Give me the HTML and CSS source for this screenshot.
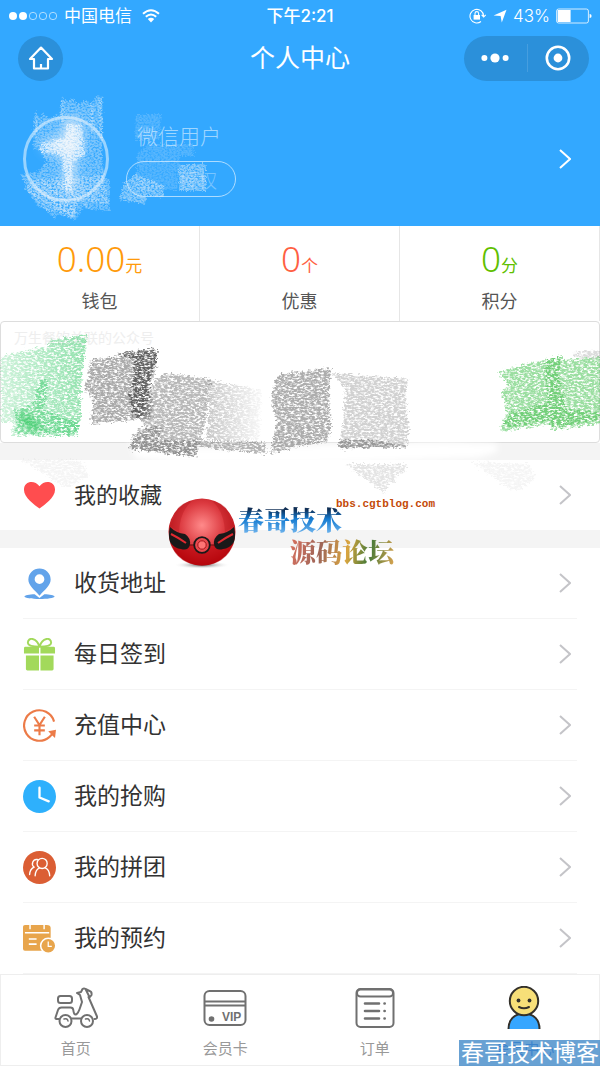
FILE: index.html
```html
<!DOCTYPE html>
<html lang="zh-CN">
<head>
    <meta charset="utf-8">
    <meta name="viewport" content="width=device-width, initial-scale=1">
    <title>个人中心</title>
    <link rel="stylesheet" href="styles.css">
</head>
<body>
<div class="page">
    <header class="top">
        <div class="status">
            <div class="status-left">
                <svg width="50" height="12" viewBox="0 0 50 12" fill="#fff" stroke="#fff">
                    <g stroke="none"><circle cx="5" cy="6" r="4"/><circle cx="15" cy="6" r="4"/></g>
                    <g fill="none" stroke-width=".6"><circle cx="25" cy="6" r="3.7"/><circle cx="35" cy="6" r="3.7"/><circle cx="45" cy="6" r="3.7"/></g>
                </svg>
                <span>中国电信</span>
                <svg class="wifi" width="18" height="14" viewBox="0 0 18 14" fill="none" stroke="#fff" stroke-width="2">
                    <path d="M1 4.8Q9-2.2 17 4.8M3.800 7.800Q9 3.200 14.200 7.800"/>
                    <path d="M5.800 10Q9 7.400 12.200 10L9 13.400z" fill="#fff" stroke="none"/>
                </svg>
            </div>
            <span class="time">下午2:21</span>
            <div class="status-right">
                <svg width="18" height="16" viewBox="0 0 18 16" fill="none" stroke="#fff" stroke-width="1.1">
                    <path d="M14.6 8A6.8 6.8 0 1 0 12 13.5M12.6 6.8l2.1 2.2 2-2.2"/>
                    <rect x="4.600" y="7" width="6.400" height="4.600" fill="#fff" stroke="none"/>
                    <path d="M6 7V5.400a1.800 1.800 0 0 1 3.600 0V7"/>
                </svg>
                <svg width="14" height="14" viewBox="0 0 14 14" fill="#fff"><path d="M13.5.8L8.800 13.400 7.600 7 .6 6.600z"/></svg>
                <span>43%</span>
                <svg width="36" height="16" viewBox="0 0 36 16">
                    <rect x=".6" y="1" width="31.800" height="14" rx="2" fill="none" stroke="#fff" stroke-width=".8"/>
                    <rect x="1.600" y="2" width="13" height="12" fill="#fff"/>
                    <path d="M33.600 6q2 0 2 2t-2 2z" fill="#fff"/>
                </svg>
            </div>
        </div>
        <nav class="navbar">
            <button class="home" aria-label="首页">
                <svg width="26" height="26" viewBox="0 0 26 26" fill="none" stroke="#fff" stroke-width="2.200" stroke-linejoin="round">
                    <path d="M13 2.600L2 14h4v9.500h14V14h4z"/><path d="M13 19v4"/>
                </svg>
            </button>
            <h1>个人中心</h1>
            <div class="capsule">
                <button aria-label="更多">
                    <svg width="28" height="12" viewBox="0 0 28 12" fill="#fff"><circle cx="3.400" cy="6" r="3"/><circle cx="14" cy="6" r="4.600"/><circle cx="24.600" cy="6" r="3"/></svg>
                </button>
                <button aria-label="关闭">
                    <svg width="26" height="26" viewBox="0 0 26 26"><circle cx="13" cy="13" r="11.200" fill="none" stroke="#fff" stroke-width="2.600"/><circle cx="13" cy="13" r="4.400" fill="#fff"/></svg>
                </button>
            </div>
        </nav>
        <section class="profile">
            <div class="avatar"></div>
            <div class="who">
                <p>微信用户</p>
                <button>授权</button>
            </div>
            <svg class="arrow" viewBox="0 0 12 20"><path d="M1 1l10 9-10 9"/></svg>
            <!-- chalk marks -->
            <svg class="chalk" viewBox="0 0 600 150" fill="#e8f0f8" preserveAspectRatio="xMinYMin meet">
                <defs>
                    <filter id="chalk" x="-10%" y="-10%" width="120%" height="120%">
                        <feTurbulence type="fractalNoise" baseFrequency=".5 .6" numOctaves="3" seed="4" result="n"/>
                        <feDisplacementMap in="SourceGraphic" in2="n" scale="6" xChannelSelector="R" yChannelSelector="G" result="d"/>
                        <feColorMatrix in="n" values="0 0 0 0 0  0 0 0 0 0  0 0 0 0 0  0 0 3 0 -.8" result="m"/>
                        <feComposite in="d" in2="m" operator="in"/>
                    </filter>
                    <filter id="glow" x="-40%" y="-40%" width="180%" height="180%"><feGaussianBlur stdDeviation="6"/></filter>
                </defs>
                <g filter="url(#chalk)">
                    <path opacity=".4" d="M35 28l5 6 3-6 5 6 13-4 1-18 5 6 6-4 4 7 9-5 4 4 8-9 4 2v62l6 46-28-5-7 18-21-9-20-15-12-19 17-3 10-10-11-17-1-24z"/>
                    <path opacity=".35" d="M24 102l13-7 66-4 7 6v30l-28-3-6 12-24-7-14-7z"/>
                    <path fill="none" stroke="#e8f0f8" stroke-width="3" opacity=".35" d="M26 104l30 30M34 100l38 34M45 98l32 32M56 98l34 26M35 34v32M62 16v22M101 14v40M92 20v30"/>
                    <path opacity=".2" d="M136 30h26l-3 26h-24zM148 60h46v12h-14l-3 34h-40V70z"/>
                    <path opacity=".5" d="M179 80h27v27h-27zM124 99l12-9 28 12v12l-17-3-2 9-26-4z"/>
                </g>
                <path filter="url(#glow)" opacity=".85" d="M42 58l20-5 3-18h15l3 29-7 8-2 40-8-2-2-38-19-6z"/>
                <path filter="url(#chalk)" opacity=".6" fill="#fff" d="M41 60l24-6 2-14h14l4 31-12 7-1 29-7-2-3-34-22-3z"/>
            </svg>
        </section>
    </header>

    <section class="stats">
        <a class="wallet" href="#"><span><b>0.00</b>元</span><em>钱包</em></a>
        <a class="coupon" href="#"><span><b>0</b>个</span><em>优惠</em></a>
        <a class="points" href="#"><span><b>0</b>分</span><em>积分</em></a>
    </section>

    <section class="banner">
        <p>万生餐饮关联的公众号</p>
        <svg class="crayon" viewBox="0 0 600 170" preserveAspectRatio="xMinYMin meet">
            <defs>
                <filter id="crayon" x="-5%" y="-5%" width="110%" height="110%">
                    <feTurbulence type="fractalNoise" baseFrequency=".3 .55" numOctaves="4" seed="9" result="n"/>
                    <feDisplacementMap in="SourceGraphic" in2="n" scale="8" xChannelSelector="R" yChannelSelector="G" result="d"/>
                    <feColorMatrix in="n" values="0 0 0 0 0  0 0 0 0 0  0 0 0 0 0  0 0 3.500 0 -1" result="m"/>
                    <feComposite in="d" in2="m" operator="in"/>
                </filter>
                <filter id="soft" x="-20%" y="-20%" width="140%" height="140%"><feGaussianBlur stdDeviation="3"/></filter>
                <linearGradient id="fade"><stop offset="0" stop-color="#36c968" stop-opacity=".25"/><stop offset="1" stop-color="#36c968" stop-opacity=".55"/></linearGradient>
                <linearGradient id="fadegrey"><stop offset="0" stop-color="#888" stop-opacity=".7"/><stop offset="1" stop-color="#888" stop-opacity=".1"/></linearGradient>
            </defs>
            <path filter="url(#soft)" fill="#fff" d="M128 114h66v12l250-6 52 2v8l-20 6-160 6H180l-46-6z"/>
            <g filter="url(#crayon)">
                <path fill="url(#fade)" d="M0 34l48-10v-6l38-5-2 14-4 34v36l-3 4-1 13H10l2-14L0 100z"/>
                <path fill="#36c968" opacity=".45" d="M38 58h9l-4 30 34 12v12H14l2-14-4-10 20-4z"/>
                <path fill="#555" opacity=".5" d="M90 38l66-10-1 20-5 14 2 34-62 6 2-26-8-8 3-14z"/>
                <path fill="#333" opacity=".6" d="M115 32l40-6 1 12-7 16-1 38-14 4-6-20 6-38z"/>
                <path fill="#888" opacity=".6" d="M154 58l10-7 46 6-4 34-6 28-6 16-66-8 4-14 14-4-6-10 6-18z"/>
                <path fill="#777" opacity=".55" d="M138 106h22l-2 12 106 2 2 12-70-7 0 10-68-8z"/>
                <path fill="url(#fadegrey)" opacity=".7" d="M208 58l30 6 22 4-2 50h-54l4-30z"/>
                <path fill="#777" opacity=".6" d="M274 58l6-6 50-6-2 24 2 36-4 14-28 4-28 8 2-16 4-16-6-22z"/>
                <path fill="#999" opacity=".45" d="M330 51l78 6-4 14 4 34-2 18-68 4 4-24 2-38z"/>
                <path fill="#777" opacity=".6" d="M338 118h36l32 6v2h-68z"/>
                <path fill="#48c254" opacity=".55" d="M496 50l30-8 36-8v4l38-3v67l-50 6-1-6-50 8 8-18-7-22 8-6z"/>
                <path fill="#38ba42" opacity=".4" d="M544 38l16-4-2 20 8 34 32 2v8l-48 8v-8l-50 8 4-13 42-12z"/>
                <path fill="#999" opacity=".35" d="M572 30l28-2v9l-28-2z"/>
                <path fill="#bbb" opacity=".4" d="M344 142l62 0-2 8-8 2-2 8-6 0-4 11z"/>
                <path fill="#ccc" opacity=".2" d="M470 140l58 2 6 14-14 12-10 0zM20 138l60 0 8 16-22 12z"/>
            </g>
            <path filter="url(#soft)" fill="#2bc65c" opacity=".75" d="M15 92l14 3 14 14-18-5z"/>
        </svg>
    </section>

    <main class="menu">
        <a class="row favorite" href="#">
            <svg class="icon" viewBox="0 0 34 34"><path fill="#ff4d4f" d="M17 30.500C12 26.500 1 19 1 11 1 2 12 .5 17 7.500 22 .5 33 2 33 11 33 19 22 26.500 17 30.500z"/></svg>
            <span>我的收藏</span>
            <svg class="arrow" viewBox="0 0 12 20"><path d="M1 1l10 9-10 9"/></svg>
        </a>
        <div class="group">
            <a class="row" href="#">
                <svg class="icon" viewBox="0 0 34 34" fill="#62a3ea">
                    <path fill-rule="evenodd" d="M17 1.500A11.500 11.500 0 0 1 28.500 13C28.500 19 22 24 17 29.500 12 24 5.500 19 5.500 13A11.500 11.500 0 0 1 17 1.500zm0 6a5 5 0 1 0 0 10 5 5 0 0 0 0-10z"/>
                    <path d="M12 28L17 32l5-4c5.500.2 10.500 1 10.500 2.300 0 3.400-31 3.400-31 0C1.500 29 6.500 28.200 12 28z"/>
                </svg>
                <span>收货地址</span>
                <svg class="arrow" viewBox="0 0 12 20"><path d="M1 1l10 9-10 9"/></svg>
            </a>
            <a class="row" href="#">
                <svg class="icon" viewBox="0 0 34 34" fill="#a2d95b">
                    <path d="M2.500 9h29q1.500 0 1.500 1.500V16H18V9h-1.500v7H1v-5.500Q1 9 2.500 9zM3 18h13.500v15.500H4.500Q3 33.500 3 32zM18 18h13.500v14q0 1.500-1.500 1.500H18z"/>
                    <path fill="none" stroke="#a2d95b" stroke-width="2" d="M17 9C14-1 5-1 5 5c0 3 4 4 12 4zM17 9C20-1 29-1 29 5c0 3-4 4-12 4z"/>
                </svg>
                <span>每日签到</span>
                <svg class="arrow" viewBox="0 0 12 20"><path d="M1 1l10 9-10 9"/></svg>
            </a>
            <a class="row" href="#">
                <svg class="icon" viewBox="0 0 34 34" fill="none" stroke="#ec7b48" stroke-width="2.200">
                    <path d="M32 13A15.700 15.700 0 1 0 27 29L32 24"/>
                    <path fill="#ec7b48" stroke="none" d="M26 23l8-1.500-1 8.500-2-2z"/>
                    <path d="M11.500 8l5.500 8.500L22.500 8M17 16.500V27M11.500 17h11M11.500 22h11"/>
                </svg>
                <span>充值中心</span>
                <svg class="arrow" viewBox="0 0 12 20"><path d="M1 1l10 9-10 9"/></svg>
            </a>
            <a class="row" href="#">
                <svg class="icon" viewBox="0 0 34 34"><circle cx="17" cy="17" r="17" fill="#2eb0fc"/><path d="M17 8v10l9.500 4" fill="none" stroke="#fff" stroke-width="2.400" stroke-linecap="round" stroke-linejoin="round"/></svg>
                <span>我的抢购</span>
                <svg class="arrow" viewBox="0 0 12 20"><path d="M1 1l10 9-10 9"/></svg>
            </a>
            <a class="row" href="#">
                <svg class="icon" viewBox="0 0 34 34" fill="none" stroke="#fff" stroke-width="1.400" stroke-linecap="round">
                    <circle cx="17" cy="17" r="17" fill="#db5e34" stroke="none"/>
                    <circle cx="19.700" cy="12.800" r="5.200"/>
                    <path d="M12.500 25.500c.3-4.500 2.200-7 4.600-8M27.500 25.500c-.3-4.500-2.200-7-4.600-8M14.800 8.800c-4.600-.8-6.800 5-3.500 7.800-2.800 1.400-4.300 4-4.500 7.700"/>
                </svg>
                <span>我的拼团</span>
                <svg class="arrow" viewBox="0 0 12 20"><path d="M1 1l10 9-10 9"/></svg>
            </a>
            <a class="row" href="#">
                <svg class="icon" viewBox="0 0 34 34">
                    <path fill="#e8a54c" d="M2 3H6.500v4.500H8V3h13v4.500h1.500V3h2q4 0 4 3v21q0 2.500-2 2.500H2Q0 29.500 0 27.500V5Q0 3 2 3z"/>
                    <path stroke="#fff" stroke-width="1.600" d="M2 11h25M6 17.500h8M6 22.800h8" fill="none"/>
                    <circle cx="26" cy="24.500" r="7.800" fill="#e8a54c" stroke="#fff" stroke-width="1.600"/>
                    <path d="M26 20v5h3.700" fill="none" stroke="#fff" stroke-width="1.300"/>
                </svg>
                <span>我的预约</span>
                <svg class="arrow" viewBox="0 0 12 20"><path d="M1 1l10 9-10 9"/></svg>
            </a>
        </div>
    </main>

    <nav class="tabs">
        <a href="#">
            <svg width="44" height="42" viewBox="0 0 44 42" fill="none" stroke="#707070" stroke-width="2" stroke-linejoin="round" stroke-linecap="round">
                <rect x="4" y="9" width="14" height="7" rx="2.500"/>
                <path d="M5 32H2.500q-1.300 0-1-1.500L4 23q1-2.500 3.500-2.500h9q2.500 0 2.800 2.500.5 5 2.700 4.500c3-1 4-7 6-12.500L26 8l-3-2 4-1 1.500-3q1.500-1 3 0l4 2q2.500.5 2 4l-1.500 2-1.500 0L43 29.500q.5 2.500-2.500 2.500M17.500 31.500h9.500M32 3l3.500 7"/>
                <circle cx="11.500" cy="34" r="6"/><circle cx="33" cy="34" r="6"/>
                <path d="M10 32q3.500-1 4 2M31.500 32q3.500-1 4 2" stroke-width="1.500"/>
            </svg>
            <span>首页</span>
        </a>
        <a href="#">
            <svg width="44" height="42" viewBox="0 0 44 42" fill="none" stroke="#707070" stroke-width="2">
                <rect x="1.500" y="4" width="41" height="34" rx="5"/>
                <path d="M2 14.500h40M2 18.500h40"/>
                <circle cx="8.500" cy="32" r="2.800" fill="#707070" stroke="none"/>
                <text class="vip" x="19" y="34">VIP</text>
            </svg>
            <span>会员卡</span>
        </a>
        <a href="#">
            <svg width="44" height="42" viewBox="0 0 44 42" fill="none" stroke="#707070" stroke-width="2" stroke-linecap="round">
                <rect x="3.500" y="2" width="37" height="38" rx="4"/><rect x="4" y="2.500" width="36" height="7" rx="3.500"/>
                <path d="M12 16.500h14M12 24h14M12 31.500h14M31.500 16.500h.2M31.500 24h.2M31.500 31.500h.2" stroke-width="2.600"/>
            </svg>
            <span>订单</span>
        </a>
        <a class="active" href="#">
            <svg width="44" height="44" viewBox="0 0 44 44" stroke="#33302a" stroke-width="2">
                <path d="M6.500 43C6.500 34 12 27.500 22 27.500S37.500 34 37.500 43" fill="#36a6ff"/>
                <circle cx="22" cy="15" r="14.200" fill="#f7df78"/>
                <path d="M17 21q5 2.600 10 0" fill="none" stroke-linecap="round"/>
                <circle cx="16.500" cy="14.500" r="1.900" fill="#33302a" stroke="none"/><circle cx="27.500" cy="14.500" r="1.900" fill="#33302a" stroke="none"/>
            </svg>
            <span>会员中心</span>
        </a>
    </nav>

    <div class="logo">
        <svg width="68" height="72" viewBox="0 0 68 72">
            <defs>
                <radialGradient id="ball" cx=".5" cy=".4" r=".6"><stop offset="0" stop-color="#ff8a8a"/><stop offset=".55" stop-color="#dc3a40"/><stop offset="1" stop-color="#b30c12"/></radialGradient>
                <radialGradient id="shade"><stop offset="0" stop-color="#555"/><stop offset="1" stop-color="#fff" stop-opacity="0"/></radialGradient>
            </defs>
            <ellipse cx="34" cy="68" rx="28" ry="4" fill="url(#shade)"/>
            <circle cx="34" cy="35" r="33.500" fill="url(#ball)"/>
            <path d="M6 20Q9 6 24 4 12 14 11 35L2 29zM62 20Q59 6 44 4 56 14 57 35l9-6z" fill="#b5131a" opacity=".35"/>
            <path d="M2 46Q34 52 66 46 58 68 34 68.500 10 68 2 46z" fill="#b80008" opacity=".55"/>
            <path d="M2 30q6 6 15 7 6 4 5 11-2 6-9 4-6 0-11-7Q0 38 2 30zM66 30q-6 6-15 7-6 4-5 11 2 6 9 4 6 0 11-7 2-7 0-15z" fill="#191919"/>
            <path d="M3 37q8 4 15 9M65 37q-8 4-15 9" stroke="#e02a30" stroke-width="2" fill="none"/>
            <path d="M21 48h5M42 48h5" stroke="#5b0808"/>
            <circle cx="34" cy="48" r="7.800" fill="#e84a4e" stroke="#191919" stroke-width="1.800"/>
            <circle cx="34" cy="48" r="4.200" fill="#ff7474" stroke="#a8141a"/>
        </svg>
        <div class="logo-text">
            <small>bbs.cgtblog.com</small>
            <strong class="blue">春哥技术</strong>
            <strong class="mixed">源码论坛</strong>
        </div>
    </div>
    <div class="stamp">春哥技术博客</div>
</div>
</body>
</html>
```

FILE: styles.css
```css
* {
    box-sizing: border-box;
}
body {
    margin: 0;
    background: #fff;
    color: #333;
    font-family: Inter, "Noto Sans CJK SC", sans-serif;
}
a {
    color: inherit;
    text-decoration: none;
}
button {
    border: 0;
    padding: 0;
    background: none;
    color: inherit;
    font-family: inherit;
    cursor: pointer;
}
svg {
    display: block;
    flex: none;
}
h1, p {
    margin: 0;
}
.page {
    position: relative;
    overflow: hidden;
}

/* header */
.top {
    background: #33a8ff;
    color: #fff;
}
.status {
    display: grid;
    grid-template-columns: 1fr auto 1fr;
    align-items: center;
    height: 32px;
    padding: 0 8px;
    font-size: 17px;
    line-height: 30px;
}
.status-left, .status-right {
    display: flex;
    align-items: center;
    gap: 6px;
}
.status-right {
    justify-content: flex-end;
    font-weight: 300;
}
.wifi {
    margin-left: 4px;
}
.time {
    font-weight: 500;
}
.navbar {
    display: grid;
    grid-template-columns: 1fr auto 1fr;
    align-items: center;
    height: 52px;
    padding: 0 11px;
}
.navbar h1 {
    font-size: 25px;
    font-weight: 400;
    line-height: 36px;
}
.home {
    display: grid;
    place-items: center;
    width: 45px;
    height: 45px;
    margin-left: 7px;
    border-radius: 50%;
    background: #2b90da;
}
.capsule {
    display: flex;
    justify-self: end;
    width: 125px;
    height: 45px;
    border-radius: 23px;
    background: #2b90da;
}
.capsule button {
    display: grid;
    flex: 1;
    place-items: center;
}
.capsule button + button {
    background: linear-gradient(#469edf, #469edf) left / 1px 28px no-repeat;
}
.profile {
    position: relative;
    display: flex;
    align-items: center;
    height: 142px;
    padding: 8px 29px 0 23px;
}
.avatar {
    width: 86px;
    height: 86px;
    border: 3px solid rgba(255, 255, 255, .5);
    border-radius: 50%;
}
.who {
    flex: 1;
    margin-left: 17px;
}
.who p {
    padding-left: 11px;
    color: rgba(255, 255, 255, .55);
    font-size: 21px;
    font-weight: 300;
    line-height: 32px;
}
.who button {
    width: 110px;
    height: 36px;
    margin-top: 8px;
    padding-left: 52px;
    border: 1px solid rgba(255, 255, 255, .6);
    border-radius: 18px;
    color: rgba(255, 255, 255, .35);
    font-size: 19px;
    text-align: left;
    font-weight: 300;
}
.arrow {
    width: 12px;
    height: 20px;
    fill: none;
    stroke: #c4c4c8;
    stroke-width: 2;
}
.profile .arrow {
    stroke: #fff;
}
.chalk, .crayon {
    position: absolute;
    top: 0;
    left: 0;
    width: 600px;
    overflow: visible;
    pointer-events: none;
}

/* wallet / coupons / points */
.stats {
    display: grid;
    grid-template-columns: repeat(3, 1fr);
    height: 95px;
}
.stats a {
    display: flex;
    flex-direction: column;
    align-items: center;
    padding-top: 11px;
    border-right: 1px solid #e6e6e6;
    font-size: 17px;
}
.stats span {
    line-height: 44px;
}
.stats b {
    font-family: "Noto Sans", sans-serif;
    font-size: 35px;
    font-weight: 300;
}
.stats em {
    color: #555;
    font-size: 18px;
    font-style: normal;
    line-height: 28px;
}
.wallet {
    color: #ff9a0a;
}
.coupon {
    color: #ff5f43;
}
.points {
    color: #5fc000;
}

.banner {
    position: relative;
    height: 122px;
    padding: 4px 13px;
    border: 1px solid #ddd;
    border-radius: 4px;
}
.banner p {
    color: #eee;
    font-size: 14px;
    line-height: 24px;
}

/* list */
.menu {
    border-top: 17px solid #f4f4f4;
}
.row {
    display: flex;
    align-items: center;
    height: 71px;
    margin: 0 23px;
    padding-right: 6px;
    border-bottom: 1px solid #f4f4f4;
    font-size: 23px;
}
.row span {
    flex: 1;
    margin-left: 18px;
    padding-bottom: 4px;
}
.icon {
    width: 33px;
    height: 33px;
}
.favorite {
    height: 70px;
    border: 0;
    font-size: 22px;
}
.group {
    border-top: 18px solid #f4f4f4;
}

/* bottom tabs */
.tabs {
    display: grid;
    grid-template-columns: repeat(4, 1fr);
    height: 92px;
    border: 1px solid #eee;
}
.tabs a {
    display: flex;
    flex-direction: column;
    align-items: center;
    justify-content: space-between;
    padding: 12px 0 4px;
    color: #999;
    font-size: 15px;
    line-height: 24px;
}
.tabs .active {
    padding-top: 11px;
    color: #1e6fe0;
}
.vip {
    fill: #707070;
    stroke: none;
    font: bold 12px "Liberation Sans", sans-serif;
}

/* overlays */
.logo {
    position: absolute;
    top: 497px;
    left: 28%;
    display: flex;
    gap: 2px;
}
.logo-text {
    display: flex;
    flex-direction: column;
}
.logo small {
    padding-left: 98px;
    color: #c44a08;
    font: bold 11px/14px "Liberation Mono", monospace;
}
.logo strong {
    align-self: flex-start;
    font-family: "Noto Serif CJK SC", "Noto Sans CJK SC", serif;
    font-size: 26px;
    font-weight: 900;
    line-height: 32px;
    background-clip: text;
    -webkit-background-clip: text;
    color: transparent;
}
.logo .blue {
    margin-top: -8px;
    background-image: linear-gradient(#102f55 20%, #147bd1 50%, #79baf0);
}
.logo .mixed {
    margin-left: 52px;
    background-image: linear-gradient(100deg, #d8705f, #9e6658 30%, #d9a53f 55%, #457a38 75%, #dca451);
}
.stamp {
    position: absolute;
    right: 0;
    bottom: 0;
    padding: 0 1px 0 2px;
    background: rgba(66, 137, 200, .8);
    color: #fff;
    font-size: 23px;
    line-height: 26px;
}
```
